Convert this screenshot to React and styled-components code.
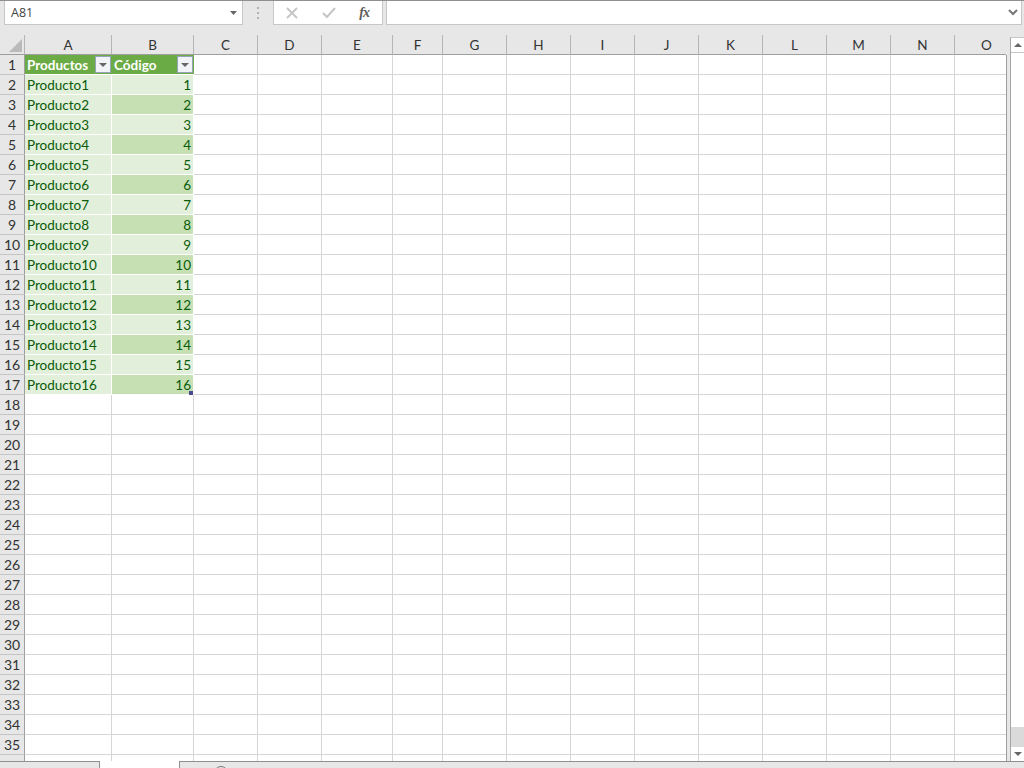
import React from 'react';
import styled, { createGlobalStyle } from 'styled-components';

const GlobalStyle = createGlobalStyle`
  html, body {
    margin: 0;
    height: 100%;
    overflow: hidden;
    background: #e6e7e6;
    font-family: Lato, "Liberation Sans", sans-serif;
  }
`;

const Window = styled.div`
  width: 1024px;
  height: 768px;
  display: flex;
  flex-direction: column;
  overflow: hidden;
  background: #e6e7e6;
`;

const FormulaBar = styled.div`
  height: 24px;
  flex: none;
  margin-bottom: 10px;
  padding-left: 4px;
  padding-right: 2px;
  display: flex;
  border-top: 1px solid #8f908f;
`;

const Box = styled.div`
  box-sizing: border-box;
  height: 24px;
  background: #fff;
  border: 1px solid #c6c7c6;
  border-top: none;
  display: flex;
  align-items: center;
`;

const NameBox = styled(Box)`
  width: 239px;
  padding: 0 5px 0 6px;
  justify-content: space-between;
  font-family: "Open Sans", sans-serif;
  font-size: 12.5px;
  color: #444;
`;

const Grip = styled.div`
  width: 30px;
  display: flex;
  align-items: center;
  justify-content: center;
  font-size: 0;
  svg { display: block; }
`;

const ButtonBox = styled(Box)`
  width: 110px;
  padding: 0 13px 0 12px;
  justify-content: space-between;
  margin-right: 3px;
`;

const Fx = styled.span`
  font-family: "Liberation Serif", serif;
  font-style: italic;
  font-weight: 700;
  font-size: 14px;
  letter-spacing: -1px;
  color: #5c5c5c;
`;

const FormulaInput = styled(Box)`
  flex: 1;
  justify-content: flex-end;
  padding-right: 3px;
`;

const SheetArea = styled.div`
  flex: none;
  height: 726px;
  display: flex;
`;

const Sheet = styled.div`
  position: relative;
  width: 1006px;
  height: 726px;
  overflow: hidden;
  flex: none;
  background: #fff;
  display: grid;
  grid-template-columns: 25px 87px 82px 64px 64px 71px 50px 64px 64px 64px 64px 64px 64px 64px 64px 64px;
  grid-auto-rows: 20px;
  align-content: start;
`;

const Corner = styled.div`
  box-sizing: border-box;
  background: #e6e7e6;
  border-right: 1px solid #b4b5b4;
  border-bottom: 1px solid #9d9e9d;
  display: flex;
  align-items: flex-end;
  justify-content: flex-end;
  padding: 0 2px 2px 0;
`;

const ColHead = styled.div`
  box-sizing: border-box;
  background: #e6e7e6;
  border-right: 1px solid #b4b5b4;
  border-bottom: 1px solid #9d9e9d;
  display: flex;
  align-items: center;
  justify-content: center;
  font-size: 13.5px;
  color: #333;
  padding-top: 1px;
`;

const RowHead = styled.div`
  box-sizing: border-box;
  background: #e6e7e6;
  border-right: 1px solid #9d9e9d;
  border-bottom: 1px solid #c4c5c4;
  display: flex;
  align-items: center;
  justify-content: center;
  font-size: 14px;
  color: #333;
`;

const Cell = styled.div`
  box-sizing: border-box;
  border-right: 1px solid #d6d6d6;
  border-bottom: 1px solid #d6d6d6;
`;

const fills = { light: '#e2efda', dark: '#c6e0b4' };

const TableCell = styled.div`
  box-sizing: border-box;
  background: ${(p) => fills[p.$fill]};
  border-right: 1px solid #fff;
  border-bottom: 1px solid #fff;
  padding: 0 2px;
  display: flex;
  align-items: center;
  justify-content: ${(p) => (p.$number ? 'flex-end' : 'flex-start')};
  font-size: 13.5px;
  color: #0a5c0a;
`;

const HeaderCell = styled.div`
  box-sizing: border-box;
  background: #6bab45;
  border-bottom: 1px solid #fff;
  padding: 0 1px 0 2px;
  display: flex;
  align-items: center;
  justify-content: space-between;
  font-size: 13.5px;
  font-weight: 700;
  color: #fff;
`;

const FilterButton = styled.div`
  box-sizing: border-box;
  width: 16px;
  height: 17px;
  background: #f1f3f7;
  border: 1px solid #93a3b8;
  display: flex;
  align-items: center;
  justify-content: center;
  &::after {
    content: '';
    border-left: 4px solid transparent;
    border-right: 4px solid transparent;
    border-top: 4px solid #666;
  }
`;

const FillHandle = styled.div`
  position: absolute;
  left: 189px;
  top: 356px;
  width: 4px;
  height: 4px;
  background: #4a4a8c;
`;

const SheetEdge = styled.div`
  width: 1px;
  height: 706px;
  margin-top: 20px;
  flex: none;
  background: #9d9e9d;
`;

const Scrollbar = styled.div`
  box-sizing: border-box;
  width: 14px;
  height: 724px;
  flex: none;
  margin: 2px 0 0 3px;
  background: #fff;
  border-left: 1px solid #a5a6a5;
  border-top: 1px solid #c6c7c6;
  display: flex;
  flex-direction: column;
`;

const ScrollButton = styled.div`
  height: 14px;
  flex: none;
  background: #fff;
  display: flex;
  align-items: center;
  justify-content: center;
  &::after {
    content: '';
    border-left: 4px solid transparent;
    border-right: 4px solid transparent;
    ${(p) => (p.$down ? 'border-top: 4px solid #666;' : 'border-bottom: 4px solid #666;')}
  }
`;

const ScrollThumb = styled.div`
  flex: 1;
  border-top: 1px solid #c6c7c6;
`;

const ScrollTrack = styled.div`
  height: 20px;
  flex: none;
  background: #d9dad9;
`;

const TabBar = styled.div`
  flex: 1;
  display: flex;
`;

const Tab = styled.div`
  box-sizing: border-box;
  width: ${(p) => p.$width}px;
  flex: none;
  background: ${(p) => (p.$active ? '#fff' : '#e6e7e6')};
  border-top: ${(p) => (p.$active ? 'none' : '1px solid #8f908f')};
  border-right: ${(p) => (p.$edge === 'right' ? '1px solid #8f908f' : 'none')};
`;

const TabRest = styled.div`
  flex: 1;
  box-sizing: border-box;
  border-top: 1px solid #8f908f;
  border-left: 1px solid #8f908f;
  padding-left: 34px;
  overflow: hidden;
`;

const AddSheet = styled.div`
  width: 14px;
  height: 14px;
  margin-top: 4px;
  box-sizing: border-box;
  border: 1px solid #777;
  border-radius: 50%;
`;

const columns = ['A', 'B', 'C', 'D', 'E', 'F', 'G', 'H', 'I', 'J', 'K', 'L', 'M', 'N', 'O'];
const blanks = Array.from({ length: 13 });

const Caret = () => (
  <svg width="7" height="4" viewBox="0 0 7 4"><path d="M0 0h7L3.5 4z" fill="#666" /></svg>
);

const App = () => {
  const rows = Array.from({ length: 36 }, (_, i) => i + 1);

  return (
    <Window>
      <GlobalStyle />
      <FormulaBar>
        <NameBox>
          A81
          <Caret />
        </NameBox>
        <Grip>
          <svg width="2" height="12" viewBox="0 0 2 12" fill="#b0b1b0">
            <rect y="0" width="2" height="2" />
            <rect y="5" width="2" height="2" />
            <rect y="10" width="2" height="2" />
          </svg>
        </Grip>
        <ButtonBox>
          <svg width="12" height="12" viewBox="0 0 12 12" stroke="#c4c5c4" strokeWidth="1.8" fill="none">
            <path d="M1 1l10 10M11 1L1 11" />
          </svg>
          <svg width="14" height="12" viewBox="0 0 14 12" stroke="#c4c5c4" strokeWidth="2" fill="none">
            <path d="M1 6l4 4 8-9" />
          </svg>
          <Fx>fx</Fx>
        </ButtonBox>
        <FormulaInput>
          <svg width="10" height="7" viewBox="0 0 10 7" stroke="#777" strokeWidth="2" fill="none">
            <path d="M1 1l4 4 4-4" />
          </svg>
        </FormulaInput>
      </FormulaBar>

      <SheetArea>
        <Sheet>
          <Corner>
            <svg width="13" height="13" viewBox="0 0 13 13"><path d="M13 0v13H0z" fill="#b9bab9" /></svg>
          </Corner>
          {columns.map((c) => <ColHead key={c}>{c}</ColHead>)}
          {rows.map((r) => (
            <React.Fragment key={r}>
              <RowHead>{r <= 35 ? r : ''}</RowHead>
              {r === 1 && (
                <>
                  <HeaderCell>Productos<FilterButton /></HeaderCell>
                  <HeaderCell>Código<FilterButton /></HeaderCell>
                </>
              )}
              {r > 1 && r <= 17 && (
                <>
                  <TableCell $fill="light">Producto{r - 1}</TableCell>
                  <TableCell $fill={r % 2 === 1 ? 'dark' : 'light'} $number>{r - 1}</TableCell>
                </>
              )}
              {r > 17 && (
                <>
                  <Cell />
                  <Cell />
                </>
              )}
              {blanks.map((_, i) => <Cell key={i} />)}
            </React.Fragment>
          ))}
          <FillHandle />
        </Sheet>
        <SheetEdge />
        <Scrollbar>
          <ScrollButton />
          <ScrollThumb />
          <ScrollTrack />
          <ScrollButton $down />
        </Scrollbar>
      </SheetArea>

      <TabBar>
        <Tab $width={100} $edge="right" />
        <Tab $width={79} $active />
        <TabRest>
          <AddSheet />
        </TabRest>
      </TabBar>
    </Window>
  );
};

export default App;
